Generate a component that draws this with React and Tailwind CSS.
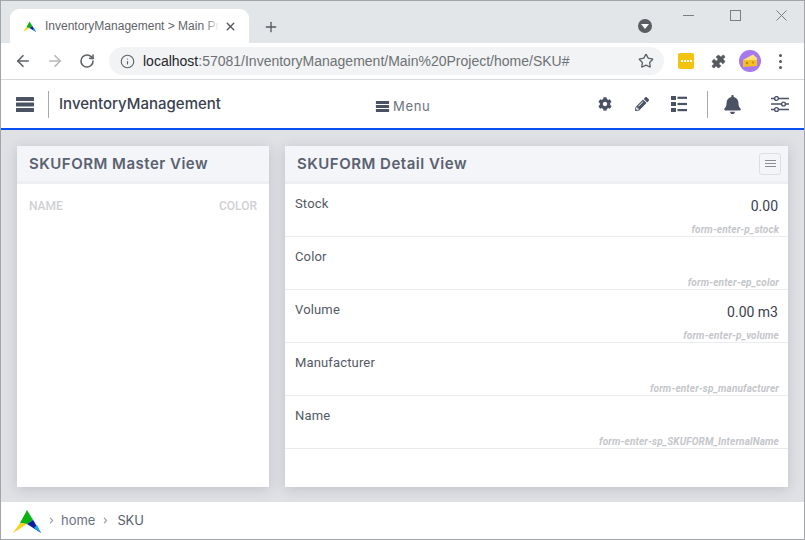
import { Info, Star, ArrowLeft, ArrowRight, RotateCw, X, Plus, Puzzle } from "lucide-react";
import { FaCog, FaPencilAlt, FaBell, FaChevronRight } from "react-icons/fa";

const FIELDS = [
  { label: "Stock", value: "0.00", hint: "form-enter-p_stock" },
  { label: "Color", value: "", hint: "form-enter-ep_color" },
  { label: "Volume", value: "0.00 m3", hint: "form-enter-p_volume" },
  { label: "Manufacturer", value: "", hint: "form-enter-sp_manufacturer" },
  { label: "Name", value: "", hint: "form-enter-sp_SKUFORM_InternalName" },
];

function Logo({ size }) {
  return (
    <svg width={size} height={size} viewBox="0 0 28 24">
      <polygon points="14,1 7,14 14,15 20,11" fill="#0cb30c" />
      <polygon points="14,1 20,11 24,16" fill="#5fc8e8" />
      <polygon points="20,11 28,24 14,15" fill="#0a1f9c" />
      <polygon points="24,16 28,24 21,19" fill="#18a8f0" />
      <polygon points="7,14 14,15 0,24" fill="#f7d31c" />
    </svg>
  );
}

function Burger({ className }) {
  return (
    <svg className={className} viewBox="0 0 18 15" fill="#4a5264">
      <rect x="0" y="0" width="18" height="4" rx="0.5" />
      <rect x="0" y="5.5" width="18" height="4" rx="0.5" />
      <rect x="0" y="11" width="18" height="4" rx="0.5" />
    </svg>
  );
}

function ListIcon() {
  return (
    <svg width="16" height="16" viewBox="0 0 16 16" fill="#4a5264">
      <rect x="0" y="0" width="5" height="4" />
      <rect x="0" y="6" width="5" height="4" />
      <rect x="0" y="12" width="5" height="4" />
      <rect x="6.5" y="0.7" width="9.5" height="2.2" />
      <rect x="6.5" y="6.9" width="9.5" height="2.2" />
      <rect x="6.5" y="13" width="9.5" height="2.2" />
    </svg>
  );
}

function Sliders() {
  return (
    <svg width="18" height="16" viewBox="0 0 18 16" fill="white" stroke="#4a5264" strokeWidth="1.4">
      <path d="M0 2.5h18M0 8h18M0 13.5h18" />
      <circle cx="5.5" cy="2.5" r="1.9" />
      <circle cx="12.5" cy="8" r="1.9" />
      <circle cx="5.5" cy="13.5" r="1.9" />
    </svg>
  );
}

function Cheese() {
  return (
    <svg width="16" height="14" viewBox="0 0 16 14">
      <polygon points="1,6 11,0.5 15,4 15,6" fill="#ffe27a" />
      <polygon points="1,6 15,6 15,12 1,13" fill="#f4bf22" />
      <circle cx="5" cy="9" r="1.2" fill="#b9851a" />
      <circle cx="11" cy="8.5" r="1" fill="#b9851a" />
    </svg>
  );
}

function Field({ label, value, hint }) {
  return (
    <div className="h-[53px] border-b border-[#e9ebee] pl-[10px] pr-[10px] flex flex-col relative">
      <div className="flex justify-between pt-[11px]">
        <span className="text-[13px] leading-[17px] tracking-[0.15px] text-[#535a66]">{label}</span>
        <span className="text-[14px] leading-[17px] text-[#3a3f50] mt-[3px]">{value}</span>
      </div>
      <span className="absolute right-[9px] bottom-0 text-[10px] leading-[13px] tracking-[0.15px] font-bold italic text-[#c4c6ca]">{hint}</span>
    </div>
  );
}

export default function App() {
  return (
    <div className="w-[805px] h-[540px] overflow-hidden flex flex-col bg-white border border-[#a3a5a8] font-['Roboto',sans-serif]">
      {/* tab strip */}
      <div className="h-[42px] shrink-0 bg-[#e3e6e9] flex items-end pl-[9px]">
        <div className="w-[239px] h-[34px] bg-white rounded-t-[9px] flex items-center pl-[13px]">
          <Logo size={13} />
          <div className="ml-[9px] w-[174px] relative overflow-hidden">
            <span className="block whitespace-nowrap text-[12px] text-[#5f6368] font-['Liberation_Sans',sans-serif]">InventoryManagement &gt; Main Pr</span>
            <div className="absolute right-0 top-0 bottom-0 w-[14px] bg-gradient-to-r from-transparent to-white" />
          </div>
          <X size={13} strokeWidth={2.6} className="text-[#55585c] ml-[5px]" />
        </div>
        <Plus size={16} strokeWidth={2} className="text-[#55585c] ml-[14px] mb-[8px]" />
        <div className="ml-auto flex items-start h-full">
          <div className="w-[14px] h-[14px] rounded-full bg-[#5a5d61] mt-[18px] flex items-center justify-center">
            <div className="w-0 h-0 border-l-[4px] border-r-[4px] border-t-[5px] border-l-transparent border-r-transparent border-t-white" />
          </div>
          <div className="w-[11px] h-px bg-[#7b7d80] mt-[14px] ml-[31px]" />
          <div className="w-[11px] h-[11px] border border-[#7b7d80] mt-[9px] ml-[36px]" />
          <svg width="11" height="11" viewBox="0 0 11 11" stroke="#7b7d80" strokeWidth="1" className="mt-[9px] ml-[35px] mr-[17px]">
            <path d="M0.5 0.5l10 10M10.5 0.5l-10 10" />
          </svg>
        </div>
      </div>

      {/* browser toolbar */}
      <div className="h-[37px] shrink-0 bg-white border-b border-[#d6d8da] flex items-center pl-[13px]">
        <ArrowLeft size={18} strokeWidth={2.2} className="text-[#5f6368]" />
        <ArrowRight size={18} strokeWidth={2.2} className="text-[#b4b6b9] ml-[14px]" />
        <RotateCw size={16} strokeWidth={2.4} className="text-[#5f6368] ml-[15px]" />
        <div className="ml-[14px] w-[555px] h-[28px] rounded-full bg-[#f1f3f4] flex items-center pl-[11px] pr-[10px]">
          <Info size={15} strokeWidth={1.8} className="text-[#5f6368]" />
          <span className="ml-[8px] text-[14px] text-[#6e7175] font-['Liberation_Sans',sans-serif]">
            <span className="text-[#24262a]">localhost</span>:57081/InventoryManagement/Main%20Project/home/SKU#
          </span>
          <Star size={16} strokeWidth={2} className="text-[#5f6368] ml-auto" />
        </div>
        <div className="ml-[14px] w-[16px] h-[16px] rounded-[2px] bg-[#f2c40f] flex items-center justify-center gap-[1px]">
          <span className="w-[2px] h-[2px] bg-white" />
          <span className="w-[2px] h-[2px] bg-white" />
          <span className="w-[2px] h-[2px] bg-white" />
          <span className="w-[2px] h-[2px] bg-white" />
        </div>
        <Puzzle size={15} fill="#55585c" strokeWidth={1} className="text-[#55585c] ml-[17px]" />
        <div className="ml-[13px] w-[22px] h-[22px] rounded-full bg-[#a678ee] flex items-center justify-center">
          <Cheese />
        </div>
        <div className="ml-[18px] flex flex-col gap-[3px]">
          <span className="w-[3px] h-[3px] rounded-full bg-[#55585c]" />
          <span className="w-[3px] h-[3px] rounded-full bg-[#55585c]" />
          <span className="w-[3px] h-[3px] rounded-full bg-[#55585c]" />
        </div>
      </div>

      {/* app navbar */}
      <div className="h-[50px] shrink-0 bg-white border-b-2 border-[#0a50f0] flex items-center pl-[15px] relative">
        <Burger className="w-[18px] h-[15px]" />
        <div className="w-px h-[27px] bg-[#a6a9ae] ml-[14px]" />
        <span className="ml-[10px] text-[15px] font-medium text-[#3a4150] font-['Inter',sans-serif]">InventoryManagement</span>
        <div className="absolute left-[374px] top-[18px] flex items-center">
          <Burger className="w-[15px] h-[11px]" />
          <span className="ml-[3px] text-[13px] leading-[16px] tracking-[0.7px] text-[#6b7280] font-['Inter',sans-serif]">Menu</span>
        </div>
        <div className="ml-auto flex items-center">
          <FaCog size={14} className="text-[#4a5264]" />
          <FaPencilAlt size={14} className="text-[#4a5264] ml-[23px]" />
          <div className="ml-[22px]"><ListIcon /></div>
          <div className="w-px h-[27px] bg-[#a6a9ae] ml-[20px]" />
          <FaBell size={19} className="text-[#4a5264] ml-[15px]" />
          <div className="ml-[29px] mr-[15px]"><Sliders /></div>
        </div>
      </div>

      {/* content */}
      <div className="flex-1 bg-[#dfe1e5] flex gap-[16px] pl-[16px] pr-[16px] pt-[16px] pb-[15px]">
        <div className="w-[252px] bg-white shadow-[0_2px_12px_rgba(60,65,80,0.2)] flex flex-col">
          <div className="h-[38px] shrink-0 bg-[#f4f5f9] border-b-[3px] border-[#eeeff3] flex items-center pl-[12px]">
            <span className="text-[15px] font-semibold tracking-[0.5px] mt-[1px] text-[#5a6170] font-['Inter',sans-serif]">SKUFORM Master View</span>
          </div>
          <div className="flex justify-between pl-[12px] pr-[12px] pt-[14px] text-[12px] leading-[16px] font-medium text-[#cfd0d3]">
            <span>NAME</span>
            <span>COLOR</span>
          </div>
        </div>
        <div className="flex-1 bg-white shadow-[0_2px_12px_rgba(60,65,80,0.2)] flex flex-col">
          <div className="h-[38px] shrink-0 bg-[#f4f5f9] border-b-[3px] border-[#eeeff3] flex items-center pl-[12px] pr-[7px]">
            <span className="text-[15px] font-semibold tracking-[0.5px] mt-[1px] text-[#5a6170] font-['Inter',sans-serif]">SKUFORM Detail View</span>
            <div className="ml-auto w-[22px] h-[22px] rounded-[3px] border border-[#dcdee2] flex flex-col items-center justify-center gap-[2px]">
              <span className="w-[11px] h-[1px] bg-[#8a8d93]" />
              <span className="w-[11px] h-[1px] bg-[#8a8d93]" />
              <span className="w-[11px] h-[1px] bg-[#8a8d93]" />
            </div>
          </div>
          {FIELDS.map(f => <Field key={f.hint} {...f} />)}
        </div>
      </div>

      {/* footer */}
      <div className="h-[37px] shrink-0 bg-white flex items-center pl-[12px] text-[13px] text-[#6b7280] font-['Inter',sans-serif]">
        <Logo size={28} />
        <FaChevronRight size={7} className="text-[#9ca0a8] ml-[7px]" />
        <span className="ml-[6px]">home</span>
        <FaChevronRight size={7} className="text-[#9ca0a8] ml-[7px]" />
        <span className="ml-[8px] tracking-[-0.2px] text-[#585e6b]">SKU</span>
      </div>
    </div>
  );
}
